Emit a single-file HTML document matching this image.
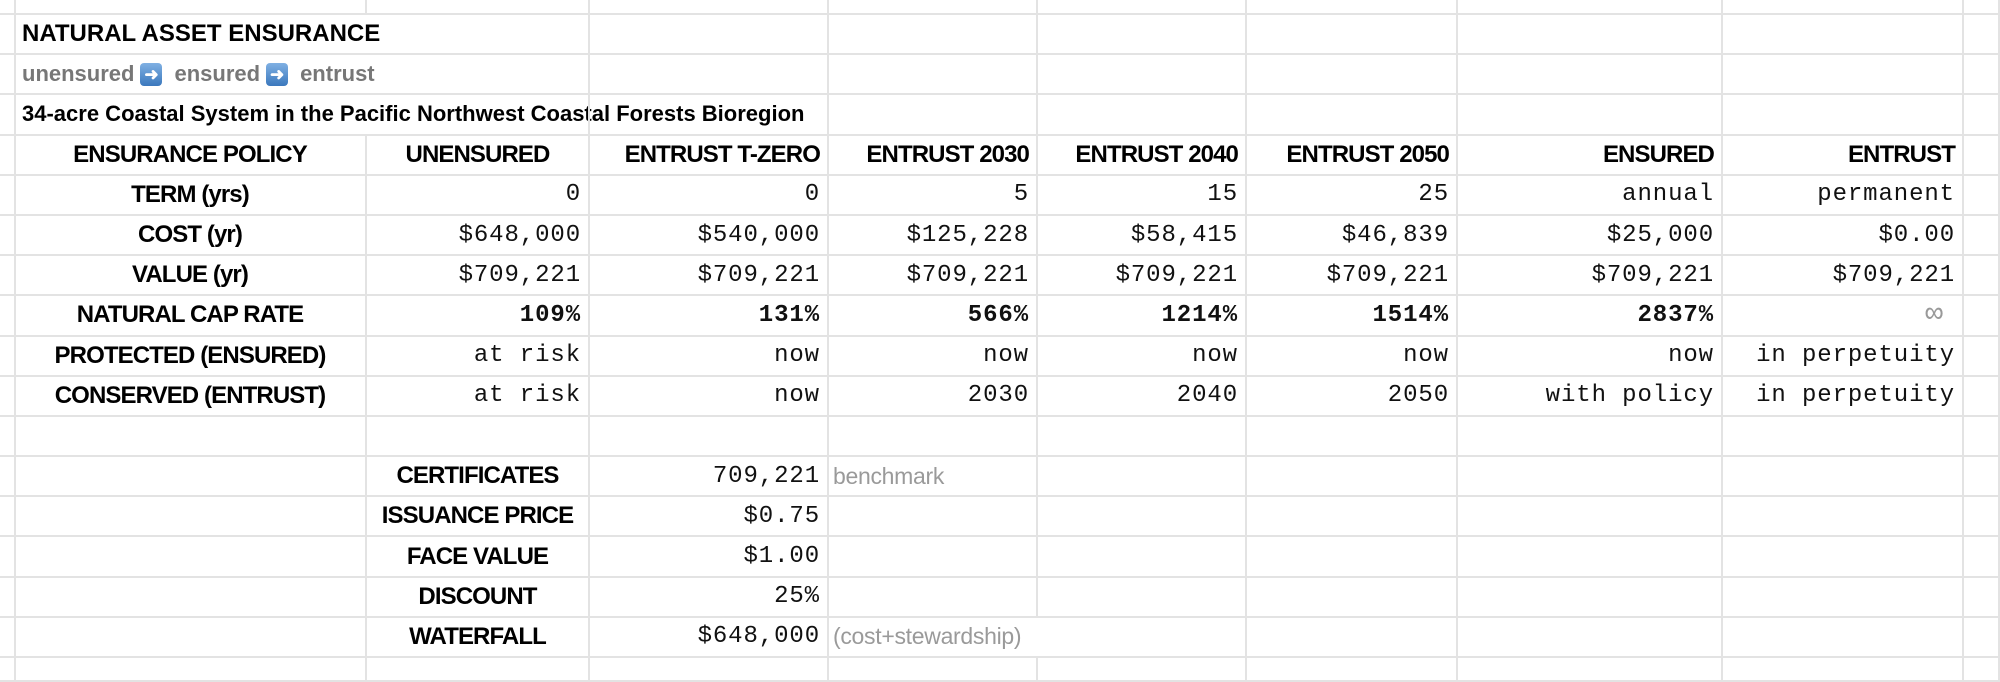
<!DOCTYPE html>
<html><head><meta charset="utf-8"><style>
html,body{margin:0;padding:0;background:#fff;width:2000px;height:682px;overflow:hidden}
.g{display:grid;grid-template-columns:15px 352px 223px 239px 209px 209px 211px 265px 241px 36px;
grid-template-rows:15px repeat(16,40.2px) 24px;}
.c{border-right:2px solid #e3e3e3;border-bottom:2px solid #e3e3e3;box-sizing:border-box;white-space:nowrap;overflow:visible;
display:flex;align-items:center;padding:0 7px;font-family:"Liberation Mono",monospace;font-size:24px;letter-spacing:0.9px;color:#111;justify-content:flex-end}
.s{font-family:"Liberation Sans",sans-serif;font-weight:bold;letter-spacing:-0.9px;font-size:24px;color:#000}
.ctr{justify-content:center}
.l{justify-content:flex-start}
.b{font-weight:bold}
.gr{font-family:"Liberation Sans",sans-serif;color:#9a9a9a;letter-spacing:-0.3px;font-size:23px;justify-content:flex-start;padding-left:4px}
.span2{grid-column:span 2}
.arr{display:inline-block;width:22px;height:23px;border-radius:4px;background:linear-gradient(#7fb0e3,#3b78bd);color:#fff;font-size:17px;line-height:23px;text-align:center;margin:0 12px 0 6px;vertical-align:-4px;letter-spacing:0}
</style></head><body><div class="g">
<div class="c"></div><div class="c"></div><div class="c"></div><div class="c"></div><div class="c"></div><div class="c"></div><div class="c"></div><div class="c"></div><div class="c"></div><div class="c"></div>
<div class="c"></div><div class="c s span2 l" style="letter-spacing:0;font-size:24px">NATURAL ASSET ENSURANCE</div><div class="c"></div><div class="c"></div><div class="c"></div><div class="c"></div><div class="c"></div><div class="c"></div><div class="c"></div>
<div class="c"></div><div class="c s span2 l" style="letter-spacing:0;font-size:22px;color:#777">unensured<span class="arr">➜</span>ensured <span class="arr">➜</span>entrust</div><div class="c"></div><div class="c"></div><div class="c"></div><div class="c"></div><div class="c"></div><div class="c"></div><div class="c"></div>
<div class="c"></div><div class="c s l" style="letter-spacing:0;font-size:22px;border-right:none">34-acre Coastal System in the Pacific Northwest Coastal Forests Bioregion</div><div class="c"></div><div class="c"></div><div class="c"></div><div class="c"></div><div class="c"></div><div class="c"></div><div class="c"></div><div class="c"></div>
<div class="c"></div><div class="c s ctr">ENSURANCE POLICY</div><div class="c s ctr">UNENSURED</div><div class="c s">ENTRUST T-ZERO</div><div class="c s">ENTRUST 2030</div><div class="c s">ENTRUST 2040</div><div class="c s">ENTRUST 2050</div><div class="c s">ENSURED</div><div class="c s">ENTRUST</div><div class="c"></div>
<div class="c"></div><div class="c s ctr">TERM (yrs)</div><div class="c">0</div><div class="c">0</div><div class="c">5</div><div class="c">15</div><div class="c">25</div><div class="c">annual</div><div class="c">permanent</div><div class="c"></div>
<div class="c"></div><div class="c s ctr">COST (yr)</div><div class="c">$648,000</div><div class="c">$540,000</div><div class="c">$125,228</div><div class="c">$58,415</div><div class="c">$46,839</div><div class="c">$25,000</div><div class="c">$0.00</div><div class="c"></div>
<div class="c"></div><div class="c s ctr">VALUE (yr)</div><div class="c">$709,221</div><div class="c">$709,221</div><div class="c">$709,221</div><div class="c">$709,221</div><div class="c">$709,221</div><div class="c">$709,221</div><div class="c">$709,221</div><div class="c"></div>
<div class="c"></div><div class="c s ctr">NATURAL CAP RATE</div><div class="c b">109%</div><div class="c b">131%</div><div class="c b">566%</div><div class="c b">1214%</div><div class="c b">1514%</div><div class="c b">2837%</div><div class="c" style="color:#999;font-size:30px;padding-right:18px">∞</div><div class="c"></div>
<div class="c"></div><div class="c s ctr">PROTECTED (ENSURED)</div><div class="c">at risk</div><div class="c">now</div><div class="c">now</div><div class="c">now</div><div class="c">now</div><div class="c">now</div><div class="c">in perpetuity</div><div class="c"></div>
<div class="c"></div><div class="c s ctr">CONSERVED (ENTRUST)</div><div class="c">at risk</div><div class="c">now</div><div class="c">2030</div><div class="c">2040</div><div class="c">2050</div><div class="c">with policy</div><div class="c">in perpetuity</div><div class="c"></div>
<div class="c"></div><div class="c"></div><div class="c"></div><div class="c"></div><div class="c"></div><div class="c"></div><div class="c"></div><div class="c"></div><div class="c"></div><div class="c"></div>
<div class="c"></div><div class="c"></div><div class="c s ctr">CERTIFICATES</div><div class="c">709,221</div><div class="c gr">benchmark</div><div class="c"></div><div class="c"></div><div class="c"></div><div class="c"></div><div class="c"></div>
<div class="c"></div><div class="c"></div><div class="c s ctr">ISSUANCE PRICE</div><div class="c">$0.75</div><div class="c"></div><div class="c"></div><div class="c"></div><div class="c"></div><div class="c"></div><div class="c"></div>
<div class="c"></div><div class="c"></div><div class="c s ctr">FACE VALUE</div><div class="c">$1.00</div><div class="c"></div><div class="c"></div><div class="c"></div><div class="c"></div><div class="c"></div><div class="c"></div>
<div class="c"></div><div class="c"></div><div class="c s ctr">DISCOUNT</div><div class="c">25%</div><div class="c"></div><div class="c"></div><div class="c"></div><div class="c"></div><div class="c"></div><div class="c"></div>
<div class="c"></div><div class="c"></div><div class="c s ctr">WATERFALL</div><div class="c">$648,000</div><div class="c gr" style="border-right:none">(cost+stewardship)</div><div class="c"></div><div class="c"></div><div class="c"></div><div class="c"></div><div class="c"></div>
<div class="c"></div><div class="c"></div><div class="c"></div><div class="c"></div><div class="c"></div><div class="c"></div><div class="c"></div><div class="c"></div><div class="c"></div><div class="c"></div>
</div></body></html>
